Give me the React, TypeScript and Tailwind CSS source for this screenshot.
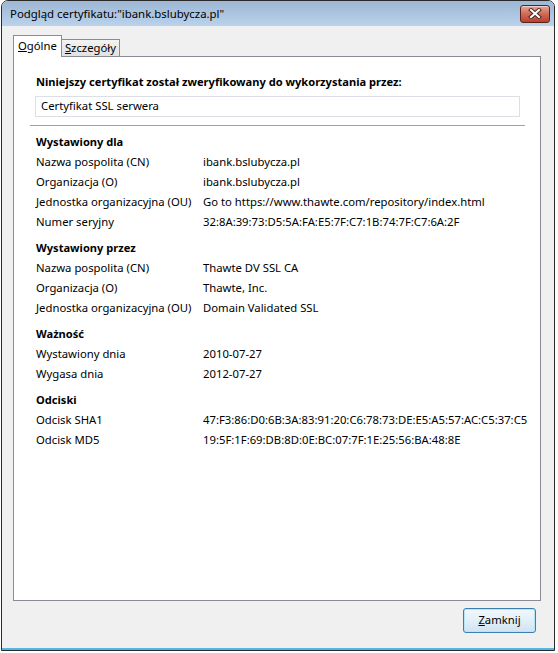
import React from 'react'

const font = "font-['Noto_Sans',sans-serif]"

type Row = [string, string]

const sections: { title: string; rows: Row[] }[] = [
  {
    title: 'Wystawiony dla',
    rows: [
      ['Nazwa pospolita (CN)', 'ibank.bslubycza.pl'],
      ['Organizacja (O)', 'ibank.bslubycza.pl'],
      ['Jednostka organizacyjna (OU)', 'Go to https://www.thawte.com/repository/index.html'],
      ['Numer seryjny', '32:8A:39:73:D5:5A:FA:E5:7F:C7:1B:74:7F:C7:6A:2F'],
    ],
  },
  {
    title: 'Wystawiony przez',
    rows: [
      ['Nazwa pospolita (CN)', 'Thawte DV SSL CA'],
      ['Organizacja (O)', 'Thawte, Inc.'],
      ['Jednostka organizacyjna (OU)', 'Domain Validated SSL'],
    ],
  },
  {
    title: 'Ważność',
    rows: [
      ['Wystawiony dnia', '2010-07-27'],
      ['Wygasa dnia', '2012-07-27'],
    ],
  },
  {
    title: 'Odciski',
    rows: [
      ['Odcisk SHA1', '47:F3:86:D0:6B:3A:83:91:20:C6:78:73:DE:E5:A5:57:AC:C5:37:C5'],
      ['Odcisk MD5', '19:5F:1F:69:DB:8D:0E:BC:07:7F:1E:25:56:BA:48:8E'],
    ],
  },
]

function CloseButton() {
  return (
    <div className="w-[30px] h-[18px] rounded-[3px] border border-[#5a2119] bg-gradient-to-b from-[#e4a695] via-[#cf6a55] to-[#b8402c] flex items-center justify-center shadow-[inset_0_1px_0_rgba(255,255,255,0.5)]">
      <svg width="14" height="11" viewBox="0 0 14 11">
        <path d="M3 2 L11 9 M11 2 L3 9" stroke="#4a2a28" strokeWidth="4" strokeLinecap="square" />
        <path d="M3 2 L11 9 M11 2 L3 9" stroke="#ffffff" strokeWidth="2" strokeLinecap="square" />
      </svg>
    </div>
  )
}

export default function App() {
  return (
    <div className={`w-[558px] h-[653px] bg-white ${font} text-[11.3px] text-black`}>
      <div className="ml-[1px] w-[554px] h-[651px] border border-[#2a2a2a] rounded-t-[7px] overflow-hidden flex flex-col bg-[#f0f0f0]">
        {/* title bar */}
        <div className="h-[25px] shrink-0 bg-gradient-to-b from-[#9db7d4] to-[#bad2eb] flex items-center justify-between pl-[8px] pr-[4px]">
          <span className="text-[11.4px] leading-none text-black">Podgląd certyfikatu:"ibank.bslubycza.pl"</span>
          <CloseButton />
        </div>

        <div className="flex-1 flex flex-col px-[11px] border-b-2 border-[#55b6e2]">
          {/* tabs */}
          <div className="flex items-end h-[30px]">
            <div className="h-[22px] px-[4px] bg-white border border-b-0 border-[#898c95] flex items-center relative top-[1px] z-10">
              <span><span className="underline">O</span>gólne</span>
            </div>
            <div className="h-[17px] px-[3px] bg-gradient-to-b from-[#f3f3f3] to-[#e2e2e2] border border-l-0 border-b-0 border-[#898c95] flex items-center">
              <span><span className="underline">S</span>zczegóły</span>
            </div>
          </div>

          {/* panel */}
          <div className="w-[528px] h-[545px] bg-white border border-[#898c95] pl-[22px] pt-[15px]">
            <div className="h-[20px] leading-[20px] font-bold text-[11.1px]">
              Niniejszy certyfikat został zweryfikowany do wykorzystania przez:
            </div>
            <div className="mt-[4px] -ml-[1px] w-[485px] h-[21px] border border-[#dcdfe5] flex items-center pl-[5px]">
              Certyfikat SSL serwera
            </div>
            <div className="mt-[8px] -ml-[6px] w-[495px] h-px bg-[#a0a0a0]" />

            {sections.map((s) => (
              <div key={s.title} className="mt-[6px]">
                <div className="h-[20px] leading-[20px] font-bold text-[11.1px]">{s.title}</div>
                {s.rows.map(([k, v]) => (
                  <div key={k + v} className="grid grid-cols-[167px_1fr] h-[20px] leading-[20px]">
                    <span className="whitespace-nowrap">{k}</span>
                    <span className="whitespace-nowrap">{v}</span>
                  </div>
                ))}
              </div>
            ))}
          </div>

          {/* footer */}
          <div className="flex-1 flex items-start justify-end pr-[7px] pt-[7px]">
            <button className="w-[73px] h-[25px] rounded-[3px] border border-[#3c7fb1] bg-gradient-to-b from-[#f2f8fc] via-[#e3eff8] to-[#cfe3f1] shadow-[inset_0_0_0_1px_#b6e4f8] flex items-center justify-center">
              <span><span className="underline">Z</span>amknij</span>
            </button>
          </div>
        </div>
      </div>
    </div>
  )
}
